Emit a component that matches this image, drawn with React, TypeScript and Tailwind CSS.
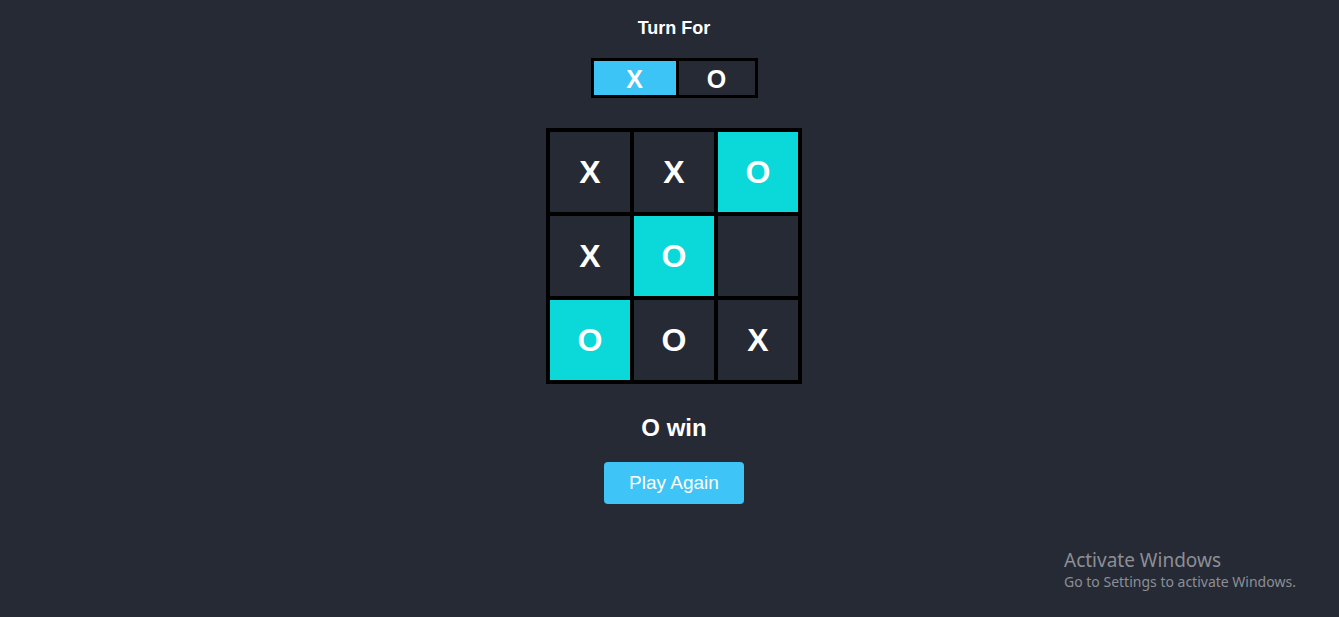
import { useState } from "react";

type Cell = "X" | "O" | "";

const board: Cell[] = ["X", "X", "O", "X", "O", "", "O", "O", "X"];
const winLine = [2, 4, 6];

export default function App() {
  const [turn, setTurn] = useState<"X" | "O">("X");

  return (
    <div
      className="relative min-h-[617px] w-full bg-[#262a35] text-white overflow-hidden"
      style={{ fontFamily: '"Liberation Sans", Arial, sans-serif' }}
    >
      <div className="flex flex-col items-center pl-[9px]">
        <h2 className="mt-[17px] text-[18px] leading-[22px] font-bold">Turn For</h2>

        <div className="mt-[19px] flex border-[3px] border-black">
          <button
            onClick={() => setTurn("X")}
            className={`w-[82px] h-[34px] text-[25px] font-bold leading-[36px] ${
              turn === "X" ? "bg-[#3dc4f6]" : "bg-[#262a35]"
            }`}
          >
            X
          </button>
          <button
            onClick={() => setTurn("O")}
            className={`w-[79px] h-[34px] border-l-[3px] border-black text-[25px] font-bold leading-[36px] ${
              turn === "O" ? "bg-[#3dc4f6]" : "bg-[#262a35]"
            }`}
          >
            O
          </button>
        </div>

        <div className="mt-[30px] grid grid-cols-3 gap-1 bg-black border-4 border-black">
          {board.map((cell, idx) => (
            <div
              key={idx}
              className={`w-[80px] h-[80px] flex items-center justify-center text-[32px] font-bold ${
                winLine.includes(idx) ? "bg-[#0bd8d8]" : "bg-[#262a35]"
              }`}
            >
              {cell}
            </div>
          ))}
        </div>

        <div className="mt-[30px] text-[24px] leading-[28px] font-bold">O win</div>

        <button className="mt-[20px] w-[140px] h-[42px] rounded-[4px] bg-[#3ec4f7] text-[19px] text-white">
          Play Again
        </button>
      </div>

      <div
        className="absolute left-[1064px] top-[548px] text-[#8c8f96]"
        style={{ fontFamily: '"Noto Sans", "Open Sans", sans-serif' }}
      >
        <div className="text-[19px] leading-[24px]">Activate Windows</div>
        <div className="text-[14px] leading-[20px]">Go to Settings to activate Windows.</div>
      </div>
    </div>
  );
}
